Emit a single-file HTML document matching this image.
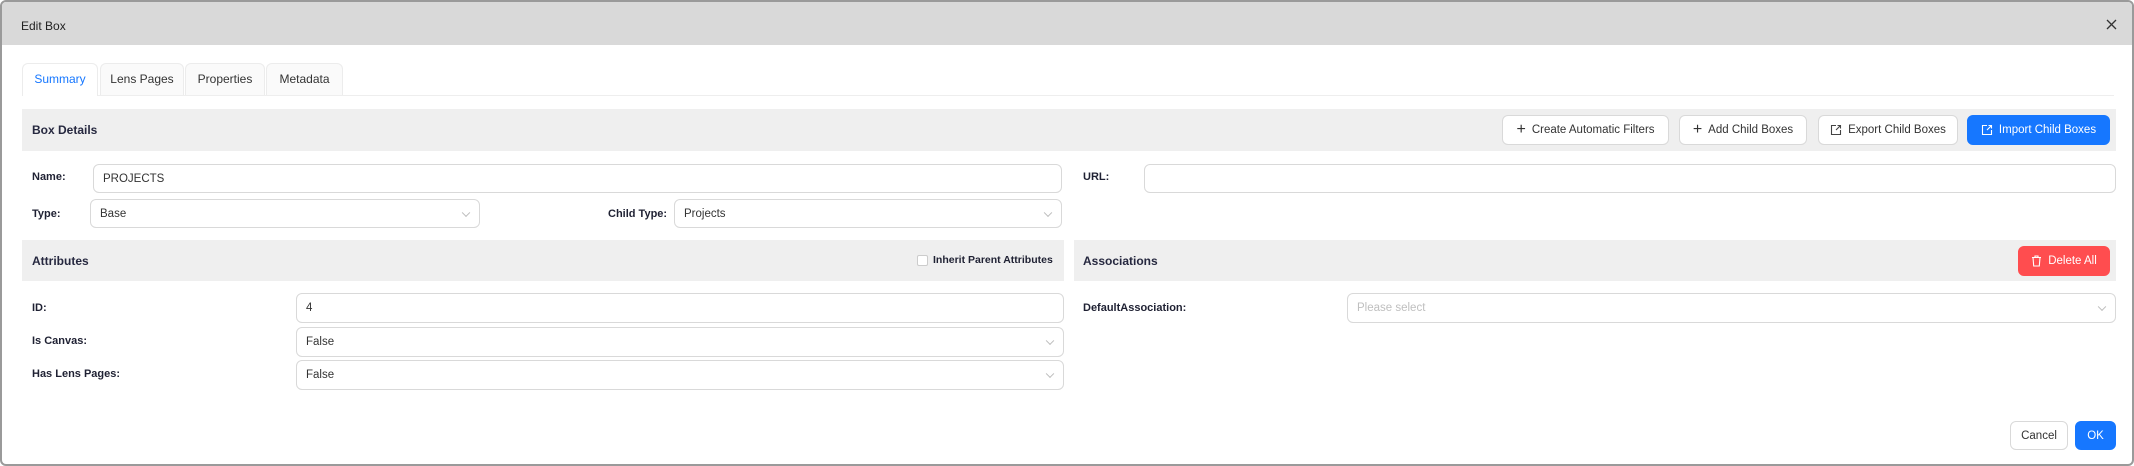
<!DOCTYPE html>
<html><head><meta charset="utf-8"><style>
*{box-sizing:border-box;margin:0;padding:0}
body{width:2134px;height:466px;background:#fff;font-family:"Liberation Sans",sans-serif;font-size:12px;color:#262626;position:relative;overflow:hidden}
.dlg{position:absolute;left:0;top:0;width:2134px;height:466px;border:2px solid #9a9a9a;border-radius:6px;overflow:hidden;background:#fff}
.hdr{position:absolute;left:0;top:0;right:0;height:43px;background:#d9d9d9}
.abs{position:absolute}
.tab{position:absolute;top:61px;height:32px;border:1px solid #ececec;border-bottom:none;border-radius:6px 6px 0 0;background:#fafafa;text-align:center;line-height:31px;font-size:12px;color:#333}
.bar{position:absolute;background:#efefef}
.bt{position:absolute;font-weight:bold;font-size:12px;color:#26283f}
.lbl{position:absolute;font-weight:bold;font-size:11px;color:#1f2133}
.inp{position:absolute;border:1px solid #d9d9d9;border-radius:6px;background:#fff;padding-left:9px;font-size:11.5px;color:#333;display:flex;align-items:center}
.chev{position:absolute;right:10px;top:50%;width:6px;height:6px;border-right:1px solid #bbb;border-bottom:1px solid #bbb;transform:translateY(-70%) rotate(45deg)}
.btn{position:absolute;border:1px solid #d9d9d9;border-radius:6px;background:#fff;display:flex;align-items:center;justify-content:center;font-size:11.5px;color:#333;gap:6px}
</style></head><body>
<div class="dlg">
<div class="hdr"></div>
<div class="abs" style="left:19px;top:17px;font-size:12px;color:#222">Edit Box</div>
<svg class="abs" style="left:2104px;top:17px" width="11" height="11" viewBox="0 0 11 11"><path d="M1 1l9 9M10 1l-9 9" stroke="#333" stroke-width="1.3"/></svg>

<div class="abs" style="left:20px;top:93px;width:2092px;border-top:1px solid #eee"></div>
<div class="tab" style="left:20px;width:76px;background:#fff;color:#1677ff;height:33px">Summary</div>
<div class="tab" style="left:98px;width:84px">Lens Pages</div>
<div class="tab" style="left:183px;width:80px">Properties</div>
<div class="tab" style="left:264px;width:77px">Metadata</div>

<div class="bar" style="left:20px;top:107px;width:2094px;height:42px"></div>
<div class="bt" style="left:30px;top:121px">Box Details</div>
<div class="btn" style="left:1500px;top:113px;width:167px;height:30px"><span style="font-size:16px">+</span>Create Automatic Filters</div>
<div class="btn" style="left:1677px;top:113px;width:128px;height:30px"><span style="font-size:16px">+</span>Add Child Boxes</div>
<div class="btn" style="left:1816px;top:113px;width:140px;height:30px"><svg width="12" height="12" viewBox="0 0 12 12"><path d="M6 1.5H1.5v9h9V6M7.5 1.5h3v3M10.5 1.5 6 6" fill="none" stroke="#444" stroke-width="1.1"/></svg>Export Child Boxes</div>
<div class="btn" style="left:1965px;top:113px;width:143px;height:30px;background:#1677ff;border-color:#1677ff;color:#fff"><svg width="12" height="12" viewBox="0 0 12 12"><path d="M6 1.5H1.5v9h9V6M7.5 1.5h3v3M10.5 1.5 6 6" fill="none" stroke="#fff" stroke-width="1.1"/></svg>Import Child Boxes</div>

<div class="lbl" style="left:30px;top:169px">Name:</div>
<div class="inp" style="left:91px;top:162px;width:969px;height:29px">PROJECTS</div>
<div class="lbl" style="left:1081px;top:169px">URL:</div>
<div class="inp" style="left:1142px;top:162px;width:972px;height:29px"></div>

<div class="lbl" style="left:30px;top:206px">Type:</div>
<div class="inp" style="left:88px;top:197px;width:390px;height:29px">Base<i class="chev"></i></div>
<div class="lbl" style="left:606px;top:206px">Child Type:</div>
<div class="inp" style="left:672px;top:197px;width:388px;height:29px">Projects<i class="chev"></i></div>

<div class="bar" style="left:20px;top:238px;width:1042px;height:41px"></div>
<div class="bt" style="left:30px;top:252px">Attributes</div>
<div class="abs" style="left:915px;top:253px;width:11px;height:11px;border:1px solid #ccc;border-radius:2px;background:#fff"></div>
<div class="abs" style="left:931px;top:252px;font-size:10.5px;font-weight:bold;color:#1f2133">Inherit Parent Attributes</div>

<div class="bar" style="left:1072px;top:238px;width:1042px;height:41px"></div>
<div class="bt" style="left:1081px;top:252px">Associations</div>
<div class="btn" style="left:2016px;top:244px;width:92px;height:30px;background:#ff4d4f;border-color:#ff4d4f;color:#fff"><svg width="11" height="12" viewBox="0 0 11 12"><path d="M1 2.5h9M4 2.5V1h3v1.5M2 2.5l.7 8.5h5.6l.7-8.5" fill="none" stroke="#fff" stroke-width="1.1"/></svg>Delete All</div>

<div class="lbl" style="left:30px;top:300px">ID:</div>
<div class="inp" style="left:294px;top:291px;width:768px;height:30px">4</div>
<div class="lbl" style="left:30px;top:333px">Is Canvas:</div>
<div class="inp" style="left:294px;top:325px;width:768px;height:30px">False<i class="chev"></i></div>
<div class="lbl" style="left:30px;top:366px">Has Lens Pages:</div>
<div class="inp" style="left:294px;top:358px;width:768px;height:30px">False<i class="chev"></i></div>

<div class="lbl" style="left:1081px;top:300px">DefaultAssociation:</div>
<div class="inp" style="left:1345px;top:291px;width:769px;height:30px;color:#bfbfbf">Please select<i class="chev"></i></div>

<div class="btn" style="left:2008px;top:419px;width:58px;height:29px">Cancel</div>
<div class="btn" style="left:2073px;top:419px;width:41px;height:29px;background:#1677ff;border-color:#1677ff;color:#fff">OK</div>
</div>
</body></html>
